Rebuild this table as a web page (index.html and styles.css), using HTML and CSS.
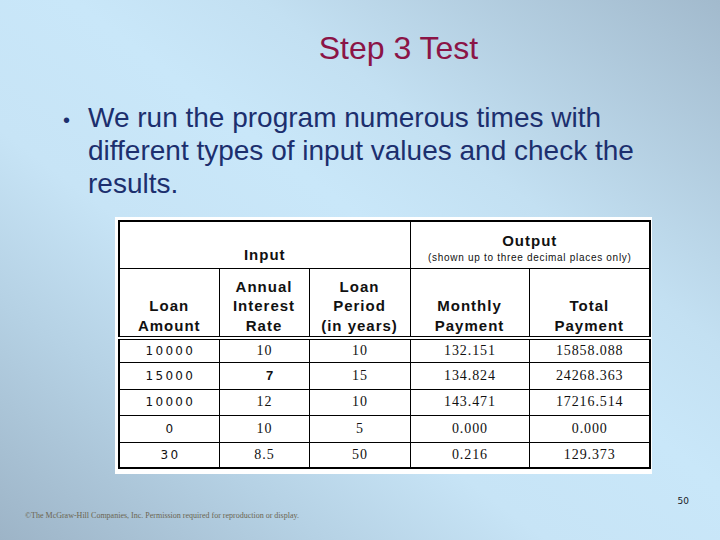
FILE: index.html
```html
<!DOCTYPE html>
<html lang="en">
<head>
<meta charset="utf-8">
<title>Step 3 Test</title>
<link rel="stylesheet" href="styles.css">
</head>
<body>
<div class="slide">
  <h1 class="title">Step 3 Test</h1>
  <ul class="bullets">
    <li><span class="dot">•</span><span class="txt">We run the program numerous times with different types of input values and check the results.</span></li>
  </ul>
  <div class="figure">
    <table class="loan">
      <colgroup>
        <col class="c1"><col class="c2"><col class="c3"><col class="c4"><col class="c5">
      </colgroup>
      <thead>
        <tr class="group">
          <th colspan="3" class="input">Input</th>
          <th colspan="2" class="output">Output<span class="note">(shown up to three decimal places only)</span></th>
        </tr>
        <tr class="cols">
          <th>Loan<br>Amount</th>
          <th>Annual<br>Interest<br>Rate</th>
          <th>Loan<br>Period<br>(in years)</th>
          <th>Monthly<br>Payment</th>
          <th>Total<br>Payment</th>
        </tr>
      </thead>
      <tbody>
        <tr class="r1"><td class="amt">10000</td><td>10</td><td>10</td><td>132.151</td><td>15858.088</td></tr>
        <tr class="r2"><td class="amt">15000</td><td class="odd">7</td><td>15</td><td>134.824</td><td>24268.363</td></tr>
        <tr class="r3"><td class="amt">10000</td><td>12</td><td>10</td><td>143.471</td><td>17216.514</td></tr>
        <tr class="r4"><td class="amt">0</td><td>10</td><td>5</td><td>0.000</td><td>0.000</td></tr>
        <tr class="r5"><td class="amt">30</td><td>8.5</td><td>50</td><td>0.216</td><td>129.373</td></tr>
      </tbody>
    </table>
  </div>
  <footer class="footer">
    <div class="pageno">50</div>
    <div class="copy">©The McGraw-Hill Companies, Inc. Permission required for reproduction or display.</div>
  </footer>
</div>
</body>
</html>
```

FILE: styles.css
```css
* { box-sizing: border-box; }
html, body { margin: 0; padding: 0; }
body { width: 720px; height: 540px; overflow: hidden; }

.slide {
  width: 720px;
  height: 540px;
  display: flex;
  flex-direction: column;
  font-family: "Liberation Sans", Arial, sans-serif;
  background: linear-gradient(to top right, #9db4c7 0%, #b5d1e4 22%, #c7e4f6 38%, #c9e7f9 55%, #c3e0f2 68%, #a2bacd 100%);
}

.title {
  margin: 0;
  padding: 30px 0 0 77px;
  text-align: center;
  font-size: 32px;
  font-weight: normal;
  line-height: 37px;
  color: #8b1446;
}

.bullets {
  list-style: none;
  margin: 34px 0 0 0;
  padding: 0 0 0 63px;
}
.bullets li {
  display: flex;
  align-items: baseline;
  font-size: 28px;
  line-height: 33px;
  color: #1c2f6e;
}
.dot { width: 25px; font-size: 20px; flex: none; }
.txt { width: 560px; }

.figure {
  margin: 17px 0 0 115px;
  width: 537px;
  background: #fff;
  padding: 3px 3px 5px 3px;
}

.loan {
  border-collapse: collapse;
  table-layout: fixed;
  width: 531px;
  border: 2px solid #000;
  color: #111;
}
.c1 { width: 100px; }
.c2 { width: 90px; }
.c3 { width: 101px; }
.c4 { width: 119px; }
.c5 { width: 121px; }

.loan th, .loan td { border: 1px solid #000; padding: 0; text-align: center; }

.loan th {
  font-weight: bold;
  font-size: 15px;
  line-height: 19.5px;
  letter-spacing: 1px;
  vertical-align: bottom;
  padding-bottom: 1px;
}
.group th { height: 47px; padding-bottom: 3px; }
.output { line-height: 20px; }
.note {
  display: block;
  font-weight: normal;
  font-size: 10px;
  line-height: 14px;
  letter-spacing: 0.7px;
}
.cols th { height: 70px; border-bottom: 4px double #000; }

.loan td {
  height: 26px;
  font-family: "Liberation Serif", "Times New Roman", serif;
  font-size: 14px;
  letter-spacing: 0.9px;
  padding-left: 0.9px;
  vertical-align: middle;
}
.loan td.amt {
  font-family: "DejaVu Sans", Verdana, sans-serif;
  font-size: 12px;
  letter-spacing: 2.3px;
  padding-left: 2.3px;
}
.loan td.odd {
  font-family: "Liberation Sans", Arial, sans-serif;
  font-weight: bold;
  font-size: 13px;
  padding-left: 12px;
}
.r1 td { height: 24px; }
.r2 td, .r4 td { height: 27px; }

.footer { margin-top: 22px; }
.pageno {
  text-align: right;
  padding-right: 31px;
  font-family: "DejaVu Sans", sans-serif;
  font-size: 9px;
  line-height: 11px;
  color: #1b1b26;
}
.copy {
  margin-top: 4px;
  padding-left: 25px;
  font-family: "Liberation Serif", serif;
  font-size: 8px;
  line-height: 10px;
  color: #6b6550;
}
```
